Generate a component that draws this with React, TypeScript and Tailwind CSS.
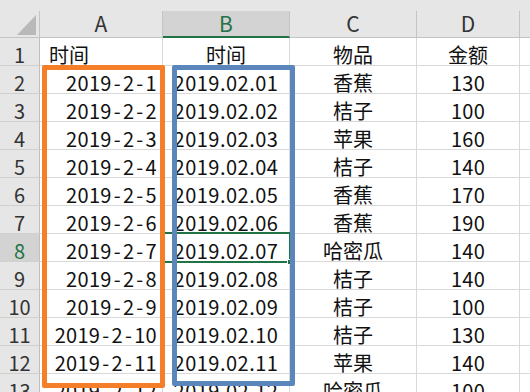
import React from "react";

const rows: [string, string, string, string][] = [
  ["2019-2-1", "2019.02.01", "香蕉", "130"],
  ["2019-2-2", "2019.02.02", "桔子", "100"],
  ["2019-2-3", "2019.02.03", "苹果", "160"],
  ["2019-2-4", "2019.02.04", "桔子", "140"],
  ["2019-2-5", "2019.02.05", "香蕉", "170"],
  ["2019-2-6", "2019.02.06", "香蕉", "190"],
  ["2019-2-7", "2019.02.07", "哈密瓜", "140"],
  ["2019-2-8", "2019.02.08", "桔子", "140"],
  ["2019-2-9", "2019.02.09", "桔子", "100"],
  ["2019-2-10", "2019.02.10", "桔子", "130"],
  ["2019-2-11", "2019.02.11", "苹果", "140"],
  ["2019-2-12", "2019.02.12", "哈密瓜", "100"],
];

function DateA({ v }: { v: string }) {
  const parts = v.split("-");
  return (
    <span>
      {parts.map((p, i) => (
        <React.Fragment key={i}>
          {i > 0 && <span className="mx-[2px]">-</span>}
          {p}
        </React.Fragment>
      ))}
    </span>
  );
}

const cell = "h-[28px] border-r border-b border-[#d9d9d9] flex items-end leading-[20px] whitespace-nowrap";
const rh = "h-[28px] border-r border-b border-r-[#bfbfbf] border-b-[#d0d0d0] flex items-end justify-center leading-[20px]";

export default function App() {
  return (
    <div
      className="relative w-[530px] h-[392px] overflow-hidden bg-white text-[20px] text-[#111]"
      style={{ fontFamily: '"Noto Sans CJK SC", "Noto Sans", sans-serif' }}
    >
      <div className="h-[11px] bg-[#e6e6e6]" />
      <div className="grid grid-cols-[40px_123px_127px_127px_103px_10px]">
        {/* header row */}
        <div className="relative h-[27px] bg-[#e6e6e6] border-r border-b border-[#c4c4c4]">
          <svg className="absolute left-0 top-0" width="40" height="27" viewBox="0 0 40 27">
            <polygon points="36,4 36,24 17,24" fill="#b9b9b9" />
          </svg>
        </div>
        <div className="h-[27px] bg-[#e6e6e6] border-r border-b border-[#c4c4c4] flex items-center justify-center text-[21px] text-[#333]">A</div>
        <div className="h-[27px] bg-[#d3d3d3] border-r border-r-[#c4c4c4] border-b-2 border-b-[#217346] flex items-center justify-center text-[21px] text-[#217346]">B</div>
        <div className="h-[27px] bg-[#e6e6e6] border-r border-b border-[#c4c4c4] flex items-center justify-center text-[21px] text-[#333]">C</div>
        <div className="h-[27px] bg-[#e6e6e6] border-r border-b border-[#c4c4c4] flex items-center justify-center text-[21px] text-[#333]">D</div>
        <div className="h-[27px] bg-[#e6e6e6] border-b border-[#c4c4c4]" />

        {/* row 1 */}
        <div className={`${rh} bg-[#e6e6e6] text-[#333]`}>1</div>
        <div className={`${cell} pl-[9px]`}>时间</div>
        <div className={`${cell} justify-center`}>时间</div>
        <div className={`${cell} justify-center`}>物品</div>
        <div className={`${cell} justify-center`}>金额</div>
        <div className={`${cell} border-r-0`} />

        {rows.map((r, i) => {
          const n = i + 2;
          const sel = n === 8;
          return (
            <React.Fragment key={n}>
              <div className={`${rh} ${sel ? "bg-[#d3d3d3] text-[#217346]" : "bg-[#e6e6e6] text-[#333]"}`}>{n}</div>
              <div className={`${cell} justify-end pr-[5px] tracking-[0.3px]`}>
                <DateA v={r[0]} />
              </div>
              <div className={`${cell} justify-center tracking-[0.5px]`}>{r[1]}</div>
              <div className={`${cell} justify-center`}>{r[2]}</div>
              <div className={`${cell} justify-center tracking-[0.3px]`}>{r[3]}</div>
              <div className={`${cell} border-r-0`} />
            </React.Fragment>
          );
        })}
      </div>

      {/* selected cell B8 */}
      <div className="absolute left-[162px] top-[232px] w-[129px] h-[31px] border-2 border-[#217346]" />
      <div className="absolute left-[287px] top-[259px] w-[6px] h-[6px] bg-[#217346] border border-white" />

      {/* highlight boxes */}
      <div className="absolute left-[42px] top-[65px] w-[123px] h-[323px] border-[5px] border-[#f47f28] rounded-[2px]" />
      <div className="absolute left-[172px] top-[65px] w-[123px] h-[321px] border-[5px] border-[#5a86bb] rounded-[2px]" />
    </div>
  );
}
